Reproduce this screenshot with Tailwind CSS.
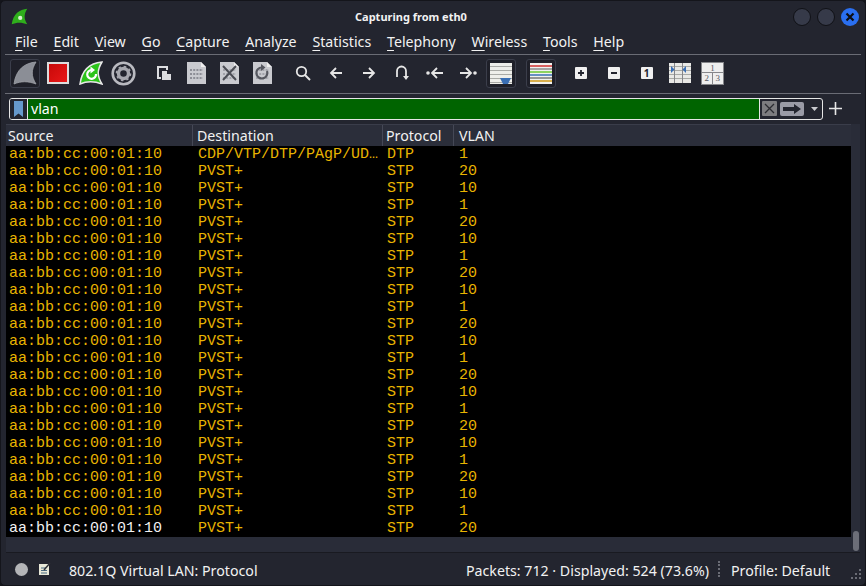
<!DOCTYPE html>
<html lang="en">
<head>
    <meta charset="UTF-8">
    <title>Capturing from eth0</title>
    <script src="https://cdn.jsdelivr.net/npm/@tailwindcss/browser@4"></script>
</head>
<body class="bg-[#14151b] overflow-hidden">
    <div class="w-[866px] h-[586px] flex flex-col bg-[#23252f] rounded-[5px] overflow-hidden border border-[#14151b] text-[#f2f2f2] font-['Noto_Sans',sans-serif]">
        <!-- title bar -->
        <div class="h-[31px] flex items-center shrink-0 relative">
            <svg class="ml-[10px]" width="17" height="17" viewBox="0 0 24 24"><path d="M1 23C3 8 12 2 23 1C18 9 18 15 23 23C15 20 8 20 1 23Z" fill="#2fae1c"/><circle cx="13" cy="14" r="3" fill="#d8f0d0"/></svg>
            <span class="absolute left-[354px] top-[9px] text-[11px] leading-[14px] font-bold">Capturing from eth0</span>
            <div class="ml-auto mr-[6px] flex gap-[6px]">
                <span class="w-[18px] h-[18px] rounded-full bg-[#363a49] border border-[#101116]"></span>
                <span class="w-[18px] h-[18px] rounded-full bg-[#363a49] border border-[#101116]"></span>
                <span class="w-[18px] h-[18px] rounded-full bg-[#2a6ff0] flex items-center justify-center">
                    <svg width="10" height="10" viewBox="0 0 10 10"><path d="M1.5 1.5L8.5 8.5M8.5 1.5L1.5 8.5" stroke="#0d0e12" stroke-width="2.2"/></svg>
                </span>
            </div>
        </div>
        <!-- menu -->
        <div class="h-[20px] mx-[4px] flex items-center gap-[15.8px] pl-[10px] pb-[2px] text-[14.2px] leading-[18px] border-b border-[#6a6c75] shrink-0 box-content">
            <span><u class="underline-offset-[3px]">F</u>ile</span>
            <span><u class="underline-offset-[3px]">E</u>dit</span>
            <span><u class="underline-offset-[3px]">V</u>iew</span>
            <span><u class="underline-offset-[3px]">G</u>o</span>
            <span><u class="underline-offset-[3px]">C</u>apture</span>
            <span><u class="underline-offset-[3px]">A</u>nalyze</span>
            <span><u class="underline-offset-[3px]">S</u>tatistics</span>
            <span><u class="underline-offset-[3px]">T</u>elephony</span>
            <span><u class="underline-offset-[3px]">W</u>ireless</span>
            <span><u class="underline-offset-[3px]">T</u>ools</span>
            <span><u class="underline-offset-[3px]">H</u>elp</span>
        </div>
        <!-- toolbar -->
        <div class="h-[36px] mx-[4px] pb-[2px] flex items-center pl-[3px] border-b border-[#6a6c75] shrink-0 box-content">
            <div class="w-[33px] flex justify-center"><div class="w-[30px] h-[29px] rounded-[3px] border border-[#3b3e4b] bg-[#1f2029] flex items-center justify-center">
                <svg width="24" height="24" viewBox="0 0 24 24"><path d="M1 23C3 8 12 2 23 1C18 9 18 15 23 23C15 20 8 20 1 23Z" fill="#8b8e96" stroke="#a0a2a8" stroke-width="0.8"/></svg>
            </div></div>
            <div class="w-[33px] flex justify-center"><div class="w-[22px] h-[22px] bg-gradient-to-br from-[#c80808] to-[#e81818] border-2 border-[#dcdcdc]"></div></div>
            <div class="w-[33px] flex justify-center">
                <svg width="24" height="24" viewBox="0 0 24 24"><path d="M1 23C3 8 12 2 23 1C18 9 18 15 23 23C15 20 8 20 1 23Z" fill="#2cc41a" stroke="#e8e8e8" stroke-width="1.5"/><path d="M17 13A4.4 4.4 0 1 1 12.5 9" fill="none" stroke="#fff" stroke-width="2.2"/><path d="M11.5 5.5L16 9L11.5 12.5Z" fill="#fff"/></svg>
            </div>
            <div class="w-[33px] flex justify-center">
                <svg width="25" height="25" viewBox="0 0 25 25"><circle cx="12.5" cy="12.5" r="10.8" fill="none" stroke="#b9bac0" stroke-width="2.6"/><circle cx="12.5" cy="12.5" r="5" fill="none" stroke="#a6a7ae" stroke-width="3.4"/><circle cx="12.5" cy="12.5" r="7" fill="none" stroke="#a6a7ae" stroke-width="1.6" stroke-dasharray="2.5 3"/></svg>
            </div>
            <div class="w-[7px]"></div>
            <div class="w-[33px] flex justify-center">
                <svg width="14" height="14" viewBox="0 0 14 14"><path d="M0 0H11V4H9V2H2V11H4V13H0Z" fill="#dcdde0"/><path d="M5 5H10V8H14V14H5Z" fill="#dcdde0"/></svg>
            </div>
            <div class="w-[33px] flex justify-center">
                <svg width="21" height="24" viewBox="0 0 21 24"><path d="M1 1H15L20 6V23H1Z" fill="#c9cacf"/><path d="M15 1L20 6H15Z" fill="#eeeeee"/><path d="M4 9H17M4 13H17M4 17H17" stroke="#8d8e96" stroke-width="2" stroke-dasharray="2 1.2"/></svg>
            </div>
            <div class="w-[33px] flex justify-center">
                <svg width="21" height="24" viewBox="0 0 21 24"><path d="M1 1H15L20 6V23H1Z" fill="#c9cacf"/><path d="M15 1L20 6H15Z" fill="#eeeeee"/><path d="M4 9H17M4 13H17M4 17H17" stroke="#a2a3aa" stroke-width="2" stroke-dasharray="2 1.2"/><path d="M4 5L17 19M17 5L4 19" stroke="#4b4d55" stroke-width="2"/></svg>
            </div>
            <div class="w-[33px] flex justify-center">
                <svg width="21" height="24" viewBox="0 0 21 24"><path d="M1 1H15L20 6V23H1Z" fill="#c9cacf"/><path d="M15 1L20 6H15Z" fill="#eeeeee"/><path d="M4 9H17M4 13H17M4 17H17" stroke="#a2a3aa" stroke-width="2" stroke-dasharray="2 1.2"/><path d="M15 10A5.5 5.5 0 1 1 10 6.5" fill="none" stroke="#55575f" stroke-width="2.2"/><path d="M9 3L13.5 6.5L9 10Z" fill="#55575f"/></svg>
            </div>
            <div class="w-[7px]"></div>
            <div class="w-[33px] flex justify-center">
                <svg width="16" height="16" viewBox="0 0 16 16"><circle cx="6.5" cy="6.5" r="4.7" fill="none" stroke="#e6e6e6" stroke-width="1.8"/><path d="M10 10L15 15" stroke="#e6e6e6" stroke-width="2"/></svg>
            </div>
            <div class="w-[33px] flex justify-center">
                <svg width="14" height="14" viewBox="0 0 14 14"><path d="M13 7H2M7 2L2 7L7 12" fill="none" stroke="#e6e6e6" stroke-width="1.8"/></svg>
            </div>
            <div class="w-[33px] flex justify-center">
                <svg width="14" height="14" viewBox="0 0 14 14"><path d="M1 7H12M7 2L12 7L7 12" fill="none" stroke="#e6e6e6" stroke-width="1.8"/></svg>
            </div>
            <div class="w-[33px] flex justify-center">
                <svg width="14" height="16" viewBox="0 0 14 16"><path d="M2 12V6A4.5 4.5 0 0 1 11 6V11" fill="none" stroke="#e6e6e6" stroke-width="1.8"/><path d="M8 11H14L11 15Z" fill="#e6e6e6"/></svg>
            </div>
            <div class="w-[33px] flex justify-center">
                <svg width="18" height="14" viewBox="0 0 18 14"><circle cx="2" cy="7" r="1.8" fill="#e6e6e6"/><path d="M17 7H6M11 2L6 7L11 12" fill="none" stroke="#e6e6e6" stroke-width="1.8"/></svg>
            </div>
            <div class="w-[33px] flex justify-center">
                <svg width="18" height="14" viewBox="0 0 18 14"><circle cx="16" cy="7" r="1.8" fill="#e6e6e6"/><path d="M1 7H12M7 2L12 7L7 12" fill="none" stroke="#e6e6e6" stroke-width="1.8"/></svg>
            </div>
            <div class="w-[33px] flex justify-center"><div class="w-[30px] h-[29px] shrink-0 rounded-[3px] border border-[#3b3e4b] bg-[#1f2029] flex items-center justify-center">
                <svg width="22" height="21" viewBox="0 0 22 21"><rect width="22" height="21" fill="#eeeeea"/><path d="M0 3.5H22M0 7.5H22M0 11.5H22M0 15.5H22M0 19.5H22" stroke="#a9aaa6" stroke-width="1"/><path d="M10 15H21L18 21H13Z" fill="#3a6fb5"/></svg>
            </div></div>
            <div class="w-[7px]"></div>
            <div class="w-[33px] flex justify-center"><div class="w-[30px] h-[29px] shrink-0 rounded-[3px] border border-[#3b3e4b] bg-[#1f2029] flex items-center justify-center">
                <svg width="22" height="21" viewBox="0 0 22 21"><rect width="22" height="21" fill="#f2f2f0"/><path d="M0 3H22" stroke="#d03030" stroke-width="1.5"/><path d="M0 6H22" stroke="#8a8a8a" stroke-width="1.5"/><path d="M0 9H22" stroke="#6cc832" stroke-width="1.5"/><path d="M0 12H22" stroke="#3a6fb5" stroke-width="1.5"/><path d="M0 15H22" stroke="#777" stroke-width="1.5"/><path d="M0 18H22" stroke="#d09a18" stroke-width="1.5"/></svg>
            </div></div>
            <div class="w-[7px]"></div>
            <div class="w-[33px] flex justify-center"><div class="w-[12px] h-[12px] bg-[#f0f0f0] rounded-[1px] flex items-center justify-center"><svg width="8" height="8" viewBox="0 0 8 8"><path d="M4 1V7M1 4H7" stroke="#23252f" stroke-width="1.8"/></svg></div></div>
            <div class="w-[33px] flex justify-center"><div class="w-[12px] h-[12px] bg-[#f0f0f0] rounded-[1px] flex items-center justify-center"><svg width="8" height="8" viewBox="0 0 8 8"><path d="M1 4H7" stroke="#23252f" stroke-width="1.8"/></svg></div></div>
            <div class="w-[33px] flex justify-center"><div class="w-[12px] h-[12px] bg-[#f0f0f0] rounded-[1px] flex items-center justify-center text-[#23252f] text-[10px] leading-none font-bold">1</div></div>
            <div class="w-[33px] flex justify-center">
                <svg width="22" height="20" viewBox="0 0 22 20"><rect width="22" height="20" fill="#e9e9e6"/><path d="M0 3.5H22M0 7.5H22M0 11.5H22M0 15.5H22" stroke="#a9aaa6"/><path d="M5.5 0V20M13.5 0V20" stroke="#85868a"/><path d="M2 3V10L5.5 6.5Z" fill="#3a6fb5"/><path d="M17 3V10L13.5 6.5Z" fill="#3a6fb5"/></svg>
            </div>
            <div class="w-[33px] flex justify-center">
                <div class="w-[23px] h-[23px] border border-[#85868a] bg-[#eeeeee] grid grid-cols-2 grid-rows-2 text-[#55575f] text-[9px] leading-[11px] text-center font-['Liberation_Serif',serif]">
                    <div class="col-span-2 border-b border-[#85868a]">1</div>
                    <div class="border-r border-[#85868a]">2</div>
                    <div>3</div>
                </div>
            </div>
        </div>
        <!-- display filter -->
        <div class="h-[29px] flex items-center pl-[8px] shrink-0">
            <div class="w-[814px] h-[22px] flex items-stretch rounded-[3px] border border-[#e6e6e6] overflow-hidden">
                <div class="w-[18px] flex items-center justify-center bg-[#23252f] border-r border-[#e6e6e6]">
                    <svg width="9" height="16" viewBox="0 0 9 16"><path d="M0 0H9V16L4.5 12.5L0 16Z" fill="#6699cc"/></svg>
                </div>
                <div class="w-[732px] bg-[#006400] pl-[3px] text-[14.2px] leading-[20px] text-white border-r border-[#e6e6e6]">vlan</div>
                <div class="flex-1 flex items-center pl-[2px]">
                    <div class="w-[15px] h-[15px] bg-[#7d7d80] rounded-[1px] flex items-center justify-center">
                        <svg width="11" height="11" viewBox="0 0 11 11"><path d="M1 1L10 10M10 1L1 10" stroke="#2a2b30" stroke-width="1.3"/></svg>
                    </div>
                    <div class="ml-[3px] w-[24px] h-[14px] bg-[#9a9ba6] rounded-[2px] flex items-center justify-center">
                        <svg width="18" height="10" viewBox="0 0 18 10"><path d="M0 3H11V0L18 5L11 10V7H0Z" fill="#23252f"/></svg>
                    </div>
                    <svg class="ml-[7px]" width="7" height="4" viewBox="0 0 7 4"><path d="M0 0H7L3.5 4Z" fill="#c9cacf"/></svg>
                </div>
            </div>
            <svg class="ml-[6px]" width="13" height="13" viewBox="0 0 13 13"><path d="M6.5 0V13M0 6.5H13" stroke="#e6e6e6" stroke-width="1.6"/></svg>
        </div>
        <!-- packet list -->
        <div class="flex-1 min-h-0 flex pl-[5px] pr-[5px] pt-[1px]">
            <div class="flex-1 flex flex-col min-w-0">
                <div class="h-[22px] grid grid-cols-[187px_190px_71px_1fr] text-[14.2px] leading-[22px] bg-[#2b2e3a] border-t border-[#3a3d4a] shrink-0">
                    <div class="pl-[2px] border-r border-[#454856]">Source</div>
                    <div class="pl-[4px] border-r border-[#454856]">Destination</div>
                    <div class="pl-[3px] border-r border-[#454856]">Protocol</div>
                    <div class="pl-[5px]">VLAN</div>
                </div>
                <div id="rows" class="h-[391px] bg-black text-[#e8b400] text-[15px] leading-[17px] font-['Liberation_Mono',monospace] overflow-hidden shrink-0 [will-change:opacity]"></div>
                <div class="flex-1 bg-[#292c38] border-b border-[#191a21]"></div>
            </div>
            <div class="w-[9px] bg-[#292c38] border-b border-[#191a21] flex flex-col justify-end pb-[1px] items-center">
                <div class="w-[6px] h-[20px] rounded-[3px] bg-[#6c6e78]"></div>
            </div>
        </div>
        <!-- status bar -->
        <div class="h-[32px] flex items-center text-[14.2px] leading-[20px] shrink-0 relative">
            <span class="ml-[14px] w-[13px] h-[13px] rounded-full bg-[#b4b5b8]"></span>
            <svg class="ml-[10px]" width="13" height="14" viewBox="0 0 13 14"><path d="M1 2H11V13H1Z" fill="#e8e8d8"/><path d="M3 6H8M3 8.5H9M3 11H9" stroke="#4b6a80"/><path d="M6 8L12 1" stroke="#303238" stroke-width="1.5"/></svg>
            <span class="ml-[18px] mt-[3px]">802.1Q Virtual LAN: Protocol</span>
            <span class="absolute left-[465px] mt-[3px]">Packets: 712 · Displayed: 524 (73.6%)</span>
            <span class="absolute left-[717px] h-[16px] border-l-2 border-dotted border-[#6a6c75]"></span>
            <span class="absolute left-[730px] mt-[3px]">Profile: Default</span>
            <svg class="absolute right-[4px] bottom-[4px]" width="12" height="12" viewBox="0 0 12 12"><path d="M10 0h2v2h-2zM6 4h2v2H6zM10 4h2v2h-2zM2 8h2v2H2zM6 8h2v2H6zM10 8h2v2h-2z" fill="#6a6c75"/></svg>
        </div>
    </div>
    <script>
        // 23 visible rows, vlan ids cycle 1 / 20 / 10
        const vlans = ['1', '20', '10'];
        let html = '';
        for (let i = 0; i < 23; i++) {
            const srcColor = i === 22 ? 'text-[#f2f2f2]' : '';
            html += `<div class="h-[17px] grid grid-cols-[187px_190px_71px_1fr] whitespace-nowrap">
                <div class="pl-[3px] ${srcColor}">aa:bb:cc:00:01:10</div>
                <div class="pl-[5px]">${i === 0 ? 'CDP/VTP/DTP/PAgP/UD…' : 'PVST+'}</div>
                <div class="pl-[4px]">${i === 0 ? 'DTP' : 'STP'}</div>
                <div class="pl-[5px]">${vlans[i % 3]}</div>
            </div>`;
        }
        document.getElementById('rows').innerHTML = html;
    </script>
</body>
</html>
